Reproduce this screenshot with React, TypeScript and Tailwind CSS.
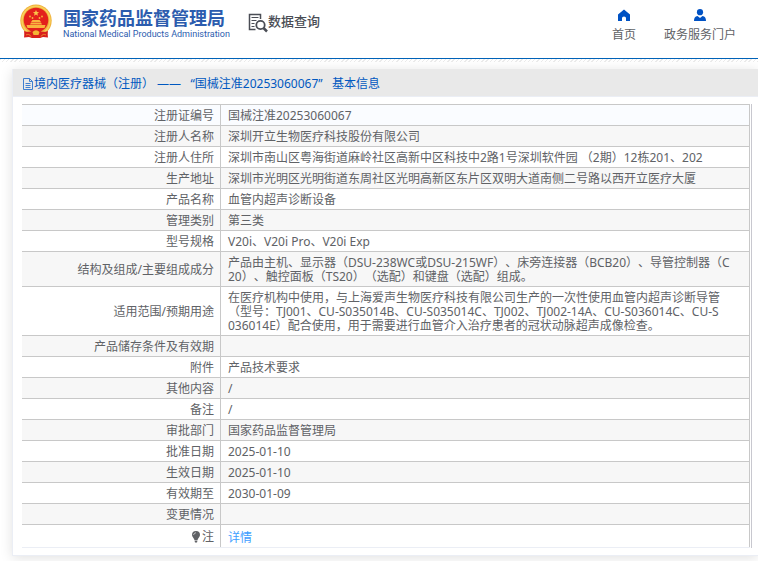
import React from "react";

type Row = { label: string; value?: React.ReactNode };

const rows: Row[] = [
  { label: "注册证编号", value: "国械注准20253060067" },
  { label: "注册人名称", value: "深圳开立生物医疗科技股份有限公司" },
  {
    label: "注册人住所",
    value: "深圳市南山区粤海街道麻岭社区高新中区科技中2路1号深圳软件园 （2期）12栋201、202",
  },
  {
    label: "生产地址",
    value: "深圳市光明区光明街道东周社区光明高新区东片区双明大道南侧二号路以西开立医疗大厦",
  },
  { label: "产品名称", value: "血管内超声诊断设备" },
  { label: "管理类别", value: "第三类" },
  { label: "型号规格", value: "V20i、V20i Pro、V20i Exp" },
  {
    label: "结构及组成/主要组成成分",
    value: (
      <>
        产品由主机、显示器（DSU-238WC或DSU-215WF）、床旁连接器（BCB20）、导管控制器（C
        <br />
        20）、触控面板（TS20）（选配）和键盘（选配）组成。
      </>
    ),
  },
  {
    label: "适用范围/预期用途",
    value: (
      <>
        在医疗机构中使用，与上海爱声生物医疗科技有限公司生产的一次性使用血管内超声诊断导管
        <br />
        （型号：TJ001、CU-S035014B、CU-S035014C、TJ002、TJ002-14A、CU-S036014C、CU-S
        <br />
        036014E）配合使用，用于需要进行血管介入治疗患者的冠状动脉超声成像检查。
      </>
    ),
  },
  { label: "产品储存条件及有效期" },
  { label: "附件", value: "产品技术要求" },
  { label: "其他内容", value: "/" },
  { label: "备注", value: "/" },
  { label: "审批部门", value: "国家药品监督管理局" },
  { label: "批准日期", value: "2025-01-10" },
  { label: "生效日期", value: "2025-01-10" },
  { label: "有效期至", value: "2030-01-09" },
  { label: "变更情况" },
];

function Emblem() {
  return (
    <svg viewBox="0 0 32 35" className="h-[35px] w-8" aria-hidden="true">
      <path d="M5 25 4 33.500l5-.5 3 1h8l3-1 5 .5L27 25Z" fill="#d8201c" />
      <ellipse cx="16" cy="16.500" rx="15.700" ry="16" fill="#efb03a" />
      <ellipse cx="16" cy="16.500" rx="14" ry="14.300" fill="none" stroke="#f8d05c" strokeWidth="1.500" />
      <circle cx="16" cy="16" r="12.300" fill="#e3211c" />
      <path d="m16 6 .9 2 2.200.2-1.700 1.400.5 2.200L16 10.600l-1.900 1.200.5-2.200-1.700-1.400 2.200-.2Z" fill="#fbc54a" />
      <g fill="#f9b53e">
        <circle cx="10" cy="12.500" r=".9" />
        <circle cx="12.500" cy="14" r=".9" />
        <circle cx="19.500" cy="14" r=".9" />
        <circle cx="22" cy="12.500" r=".9" />
        <path d="m11 18 1.500-2h7l1.500 2ZM10 20.500l1-2h10l1 2ZM6.500 21h19l-1 3h-17Z" />
      </g>
      <path d="M4 27c4 1.500 7 1 9-1h6c2 2 5 2.500 9 1l-1 5-5-1-2 2.500h-8L10 31l-5 1Z" fill="#d8201c" />
      <path d="M12.500 28q3.500-3.500 7 0l-1 3h-5Z" fill="#f4b534" />
      <path d="M6 31c2.500-1.500 4 0 5 1.500M26 31c-2.500-1.500-4 0-5 1.500" fill="none" stroke="#f0a030" strokeWidth=".8" />
    </svg>
  );
}

function QueryIcon() {
  return (
    <svg viewBox="0 0 20 20" className="size-5" fill="none" stroke="#4a4d55" aria-hidden="true">
      <path d="M7.500 16.500h-6v-15h11V6" strokeWidth="1.500" />
      <path d="M3.500 4.500h7M3.500 7.500h5M3.500 10.500h3M3.500 13.500h3" />
      <circle cx="12.500" cy="12" r="4.200" strokeWidth="1.800" />
      <path d="m15.500 15 3.500 3.500" strokeWidth="2.500" />
    </svg>
  );
}

function DocIcon() {
  return (
    <svg viewBox="0 0 12 12" className="size-3" fill="none" stroke="#3f7fd0" aria-hidden="true">
      <path d="M1.500.5h6l3 3v8h-9ZM7.500.5v3h3M3.500 5.500h5M3.500 7.500h5M3.500 9.500h5" />
    </svg>
  );
}

export default function App() {
  return (
    <div className="overflow-hidden bg-white pb-2 font-['Noto_Sans','Noto_Sans_CJK_SC',sans-serif] text-xs text-[#606266] [text-spacing-trim:space-all]">
      <header className="flex h-[59px] items-start border-b border-[#0062b8] pl-5">
        <div className="flex items-start gap-[11px] pt-1">
          <Emblem />
          <div className="whitespace-nowrap pt-0.5 text-[#2c5cae]">
            <div className="font-['Noto_Sans_CJK_SC',sans-serif] text-lg leading-[22px] font-bold">国家药品监督管理局</div>
            <div className="font-[Roboto,sans-serif] text-[9px] leading-[12px]">
              National Medical Products Administration
            </div>
          </div>
        </div>
        <div className="ml-[18px] flex whitespace-nowrap pt-[13px]">
          <QueryIcon />
          <span className="text-[13px] leading-4 font-medium text-[#4a4d55]">数据查询</span>
        </div>
        <nav className="ml-auto flex gap-7 whitespace-nowrap pt-[9px] pr-[22px]">
          <a href="#home" className="flex flex-col items-center gap-[5px]">
            <svg viewBox="0 0 12 12" className="size-3" fill="#0052c4" aria-hidden="true">
              <path d="M6 .5 0 5.500V12h4V9q0-1.500 2-1.500T8 9v3h4V5.500Z" />
            </svg>
            <span className="leading-[18px]">首页</span>
          </a>
          <a href="#portal" className="flex flex-col items-center gap-[5px]">
            <svg viewBox="0 0 12 12" className="size-3" fill="#0052c4" aria-hidden="true">
              <circle cx="6" cy="3.200" r="3.100" />
              <path d="M0 12c0-3 1-4.500 3.500-5L6 9l2.500-2C11 7.500 12 9 12 12Z" />
            </svg>
            <span className="leading-[18px]">政务服务门户</span>
          </a>
        </nav>
      </header>
      <div className="h-[3px] bg-[repeating-linear-gradient(135deg,#ececec_0px,#ececec_1px,#ffffff_1px,#ffffff_3px)]" />

      <main className="mt-[7px] ml-3 border-b border-l border-[#ebeef5] bg-white shadow-[0_2px_12px_rgba(0,0,0,0.12)]">
        <h1 className="flex h-7 items-center border-b border-[#ebeef5] bg-[#e9e9e9] pt-0.5 pl-[9px] whitespace-nowrap text-[#0058c0]">
          <DocIcon />
          <span className="whitespace-pre">境内医疗器械（注册） ——   “国械注准20253060067”   基本信息</span>
        </h1>
        <div className="pt-[7px] pr-1.5 pb-[7px] pl-[9px]">
          <div className="border-r border-[#c8c8cf] pr-px">
            <table className="w-full border-separate border-spacing-0 border-b border-[#ebeef5] leading-[14px]">
              <tbody>
                {rows.map((row, i) => (
                  <tr key={row.label} className={i === 0 ? "bg-[#fafcff]" : i % 2 ? "bg-[#f7f7f7]" : "bg-white"}>
                    <th
                      scope="row"
                      className="h-[21px] w-[199px] border-t border-r border-[#c8c8c8] pt-1 pr-1.5 pb-0.5 text-right font-normal"
                    >
                      {row.label}
                    </th>
                    <td className="border-t border-r border-[#c8c8c8] pt-1 pb-0.5 pl-[7px] whitespace-nowrap">
                      {row.value}
                    </td>
                  </tr>
                ))}
                <tr>
                  <th scope="row" className="h-[23px] border-t border-r border-[#c8c8c8] pt-0.5 pr-1.5 font-normal">
                    <span className="flex items-center justify-end">
                      <svg viewBox="0 0 12 12" className="size-3" fill="#606266" aria-hidden="true">
                        <path d="M6 0a4 4 0 0 0-4 4c0 2 2 3 2.500 5h3C8 7 10 6 10 4a4 4 0 0 0-4-4ZM4.500 9.500h3L7 11.500H5Z" />
                        <path d="M3.500 4Q4 2 6 1.700" fill="none" stroke="#fff" strokeWidth=".6" />
                      </svg>
                      注
                    </span>
                  </th>
                  <td className="border-t border-r border-[#c8c8c8] pt-1 pl-[7px]">
                    <a href="#details" className="text-[#409eff]">
                      详情
                    </a>
                  </td>
                </tr>
              </tbody>
            </table>
          </div>
        </div>
      </main>
    </div>
  );
}
